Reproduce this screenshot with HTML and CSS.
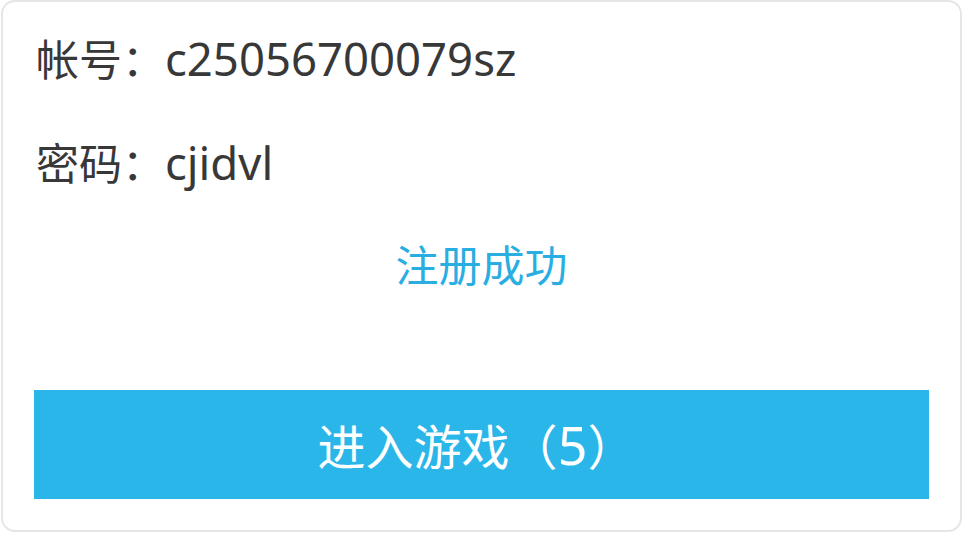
FILE: index.html
```html
<!DOCTYPE html>
<html lang="zh">
<head>
<meta charset="utf-8">
<link rel="stylesheet" href="styles.css">
</head>
<body>
<div class="card">
  <div class="row row-account">帐号：<span class="latin">c25056700079sz</span></div>
  <div class="row row-password">密码：<span class="latin">cjidvl</span></div>
  <div class="success">注册成功</div>
  <div class="enter">进入游戏（<span class="num">5</span>）</div>
</div>
</body>
</html>
```
FILE: styles.css
```css
html, body {
  margin: 0;
  padding: 0;
  background: #ffffff;
}
body {
  width: 963px;
  height: 533px;
  overflow: hidden;
  font-family: "Noto Sans CJK SC", "Noto Sans", sans-serif;
}
.card {
  box-sizing: border-box;
  margin: 0 1px 0 1px;
  width: 961px;
  height: 532px;
  border: 2px solid #e6e6e6;
  border-radius: 14px;
  padding: 25px 31px 0 31px;
  display: flex;
  flex-direction: column;
  background: #fff;
}
.row {
  font-size: 43px;
  line-height: 60px;
  height: 60px;
  color: #383838;
  padding-left: 2px;
  white-space: nowrap;
}
.latin {
  font-family: "Noto Sans", sans-serif;
  font-size: 45.5px;
}
.row-password {
  margin-top: 44px;
}
.success {
  margin-top: 42px;
  font-size: 43px;
  line-height: 60px;
  height: 60px;
  color: #2aaee2;
  text-align: center;
}
.enter {
  margin-top: 97px;
  height: 109px;
  background: #2bb6e9;
  color: #ffffff;
  font-size: 48px;
  line-height: 109px;
  text-align: center;
  white-space: nowrap;
  padding-right: 10px;
}
.num {
  font-family: "Noto Sans", sans-serif;
  font-size: 52px;
}
```
